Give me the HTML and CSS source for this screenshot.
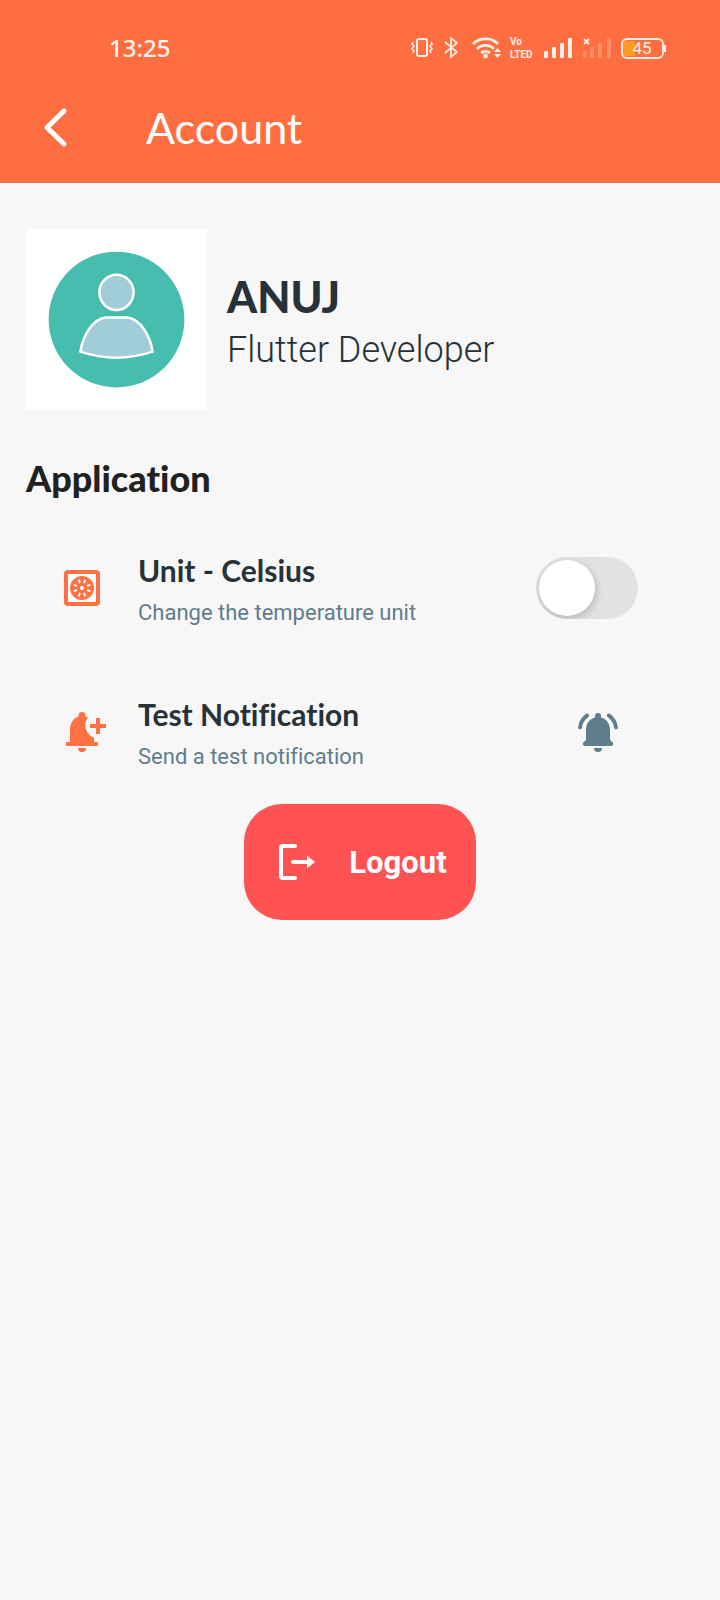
FILE: index.html
```html
<!DOCTYPE html>
<html lang="en">
<head>
<meta charset="utf-8">
<meta name="viewport" content="width=device-width, initial-scale=1">
<title>Account</title>
<link rel="stylesheet" href="styles.css">
</head>
<body>
<header class="header">
  <div class="status">
    <time class="clock">13:25</time>
    <svg class="status-icons" viewBox="0 0 260 32" aria-hidden="true">
      <g fill="none" stroke="#ffefe6" stroke-width="2">
        <rect x="7" y="7" width="10" height="17" rx="2"/>
        <path d="M3 10l-1 2 2 2-2 3 2 2-1 2M21 10l1 2-2 2 2 3-2 2 1 2" stroke-width="1.6"/>
        <path d="M35 10l12 10-6 5V6l6 5-12 10" stroke-width="1.7"/>
        <path d="M63 12a18 18 0 0 1 25 0M67 17a12 12 0 0 1 17 0M71 21a7 7 0 0 1 9 0" stroke-width="2.7"/>
      </g>
      <g fill="#ffefe6">
        <circle cx="75.500" cy="24" r="2.400"/>
        <path d="M84 20h7l-3.500-4zM84 22h7l-3.500 4z"/>
        <rect x="134" y="19" width="4" height="7" rx="1"/>
        <rect x="142" y="15" width="4" height="11" rx="1"/>
        <rect x="150" y="11" width="4" height="15" rx="1"/>
        <rect x="158" y="6" width="4" height="20" rx="1"/>
      </g>
      <text class="volte" x="100" y="13">Vo</text>
      <text class="volte" x="100" y="26">LTED</text>
      <g fill="#ff8e68">
        <rect x="173" y="19" width="4" height="7" rx="1"/>
        <rect x="180" y="15" width="4" height="11" rx="1"/>
        <rect x="188" y="11" width="4" height="15" rx="1"/>
        <rect x="197" y="6" width="4" height="20" rx="1"/>
      </g>
      <path d="M174 7l5 5M179 7l-5 5" stroke="#ffefe6" stroke-width="2"/>
      <path d="M225 9h-9a3 3 0 0 0-3 3v9a3 3 0 0 0 3 3h9z" fill="#ff9a25"/>
      <rect x="212" y="7" width="41" height="19" rx="5" fill="none" stroke="#ffefe6" stroke-width="1.800"/>
      <path d="M255 13v7" stroke="#ffefe6" stroke-width="2"/>
      <text class="battery" x="232" y="22">45</text>
    </svg>
  </div>
  <div class="appbar">
    <button class="back" type="button" aria-label="Back">
      <svg class="icon" viewBox="0 0 48 48" fill="none" stroke="#fff" stroke-width="5" stroke-linecap="round" stroke-linejoin="round"><path d="M32 7L15 23.500 32 40"/></svg>
    </button>
    <h1 class="title">Account</h1>
  </div>
</header>
<main class="content">
  <section class="profile">
    <svg class="avatar" viewBox="0 0 180 180" role="img" aria-label="Profile picture">
      <circle cx="90" cy="90" r="67.500" fill="#46bdae"/>
      <g fill="#a1cddb" stroke="#fff" stroke-width="2.500" stroke-linejoin="round">
        <ellipse cx="90" cy="63" rx="17" ry="17.500"/>
        <path d="M79 88H101C114 90 123 105 126 122Q90 134 54 122C57 105 66 90 79 88Z"/>
      </g>
    </svg>
    <div class="person">
      <h2 class="name">ANUJ</h2>
      <p class="role">Flutter Developer</p>
    </div>
  </section>
  <h2 class="section">Application</h2>
  <ul class="list">
    <li class="row">
      <svg class="icon" viewBox="0 0 24 24" aria-hidden="true">
        <rect x="4" y="4" width="16" height="16" rx="1" fill="#fff" stroke="#ff7043" stroke-width="2"/>
        <circle cx="12" cy="12" r="6" fill="#ff7043"/>
        <circle cx="12" cy="12" r="1" fill="#fff"/>
        <g stroke="#fff" stroke-width="1">
          <path d="M11 9.500L10.300 7.800M13 9.500l.7-1.700M11 14.500l-.7 1.700M13 14.500l.7 1.700M9.500 11L7.800 10.300M9.500 13L7.800 13.700M14.500 11l1.700-.7M14.500 13l1.700.7"/>
        </g>
      </svg>
      <label class="text" for="unit"><span class="label">Unit - Celsius</span><span class="hint">Change the temperature unit</span></label>
      <input class="switch" id="unit" type="checkbox" role="switch">
    </li>
    <li class="row">
      <svg class="icon" viewBox="0 0 24 24" fill="#ff7043" aria-hidden="true">
        <path d="M10.300 4.300V3.700a1.700 1.700 0 0 1 3.400 0v.6l1.300.5A6.300 6.300 0 0 0 18 14.700V17h2v2H4v-2h2v-6c0-3.300 1.800-6 4.300-6.700zM10 20h4a2 2 0 0 1-4 0z"/>
        <path d="M19 5h2v3h3v2h-3v3h-2v-3h-3V8h3z"/>
      </svg>
      <div class="text"><span class="label">Test Notification</span><span class="hint">Send a test notification</span></div>
      <button class="notify" type="button" aria-label="Send a test notification">
        <svg class="icon" viewBox="0 0 24 24" fill="#607d8b">
          <path d="M10.500 4.700V4a1.500 1.500 0 0 1 3 0v.7C16.400 5.400 18 8 18 11v5l1.300 1.300c.6.600.2 1.700-.7 1.700H5.400c-.9 0-1.300-1.100-.7-1.700L6 16v-5c0-3 1.600-5.600 4.500-6.300zM10 20h4a2 2 0 0 1-4 0z"/>
          <path d="M6.600 3.700A9 9 0 0 0 3 9.700M17.400 3.700a9 9 0 0 1 3.600 6" fill="none" stroke="#607d8b" stroke-width="1.900" stroke-linecap="round"/>
        </svg>
      </button>
    </li>
  </ul>
  <button class="logout" type="button">
    <svg class="icon" viewBox="0 0 24 24" fill="none" stroke="#fff" stroke-width="2" stroke-linecap="round" aria-hidden="true">
      <path d="M11 4H5a1 1 0 0 0-1 1v14a1 1 0 0 0 1 1h6M10 12h7"/>
      <path d="M17 8.700L21 12l-4 3.300z" fill="#fff" stroke="none"/>
    </svg>
    <span>Logout</span>
  </button>
</main>
</body>
</html>
```
FILE: styles.css
```css
* { box-sizing: border-box; }
body {
  margin: 0;
  min-height: 100vh;
  background: #f7f7f7;
  color: #263238;
  font-family: Roboto, "Liberation Sans", sans-serif;
}
h1, h2, p, ul { margin: 0; padding: 0; font-size: inherit; font-weight: inherit; }
button { border: 0; padding: 0; background: none; color: inherit; font: inherit; cursor: pointer; }
.icon { display: block; flex: none; width: 48px; height: 48px; }

.header { background: #ff6e40; color: #fff; padding-top: 32px; }
.status { display: flex; align-items: center; justify-content: space-between; padding: 0 50px 0 109px; }
.clock { font: 500 24px/32px "Noto Sans", sans-serif; color: #fff4ee; }
.status-icons { width: 260px; height: 32px; }
.volte { font: 700 10px Roboto, sans-serif; fill: #ffefe6; }
.battery { font: 400 17px Roboto, sans-serif; fill: #ffefe6; text-anchor: middle; }
.appbar { display: flex; align-items: center; gap: 66px; height: 119px; padding: 8px 32px 0; }
.title { font: 400 43px/56px Lato, sans-serif; }

.content { display: flex; flex-direction: column; padding: 46px 26px 32px; }
.profile { display: flex; align-items: center; gap: 20px; }
.avatar { display: block; flex: none; width: 181px; height: 181px; background: #fff; }
.person { padding-top: 8px; }
.name { font: 900 43px/52px Lato, sans-serif; }
.role { font-size: 36px; line-height: 54px; font-weight: 300; }
.section { margin-top: 46px; font: 900 36px/44px Lato, sans-serif; color: #212121; }
.section, .label, .hint { font-variant-ligatures: none; }

.list { list-style: none; margin-top: 16px; }
.row { display: flex; align-items: center; gap: 32px; height: 144px; padding: 0 56px 0 32px; }
.text { flex: 1; display: flex; flex-direction: column; gap: 2px; padding-top: 8px; }
.label { font-family: Lato, sans-serif; font-size: 30px; line-height: 40px; font-weight: 700; }
.hint { font-size: 22px; line-height: 42px; color: #607d8b; }
.switch {
  appearance: none;
  flex: none;
  display: flex;
  width: 102px;
  height: 62px;
  margin: 0;
  padding: 3px;
  border-radius: 31px;
  background: #e2e2e2;
  overflow: hidden;
  cursor: pointer;
}
.switch::before {
  content: "";
  width: 56px;
  height: 56px;
  border-radius: 50%;
  background: #fff;
  box-shadow: 1px 3px 8px rgba(0, 0, 0, 0.2);
}
.switch:checked { justify-content: flex-end; background: #ff7043; }
.notify { margin-right: 16px; }
.logout {
  display: flex;
  align-items: center;
  align-self: center;
  gap: 28px;
  height: 116px;
  padding: 0 29px;
  border-radius: 38px;
  background: #ff5252;
  color: #fff;
  font-size: 31px;
  font-weight: 700;
}
```
